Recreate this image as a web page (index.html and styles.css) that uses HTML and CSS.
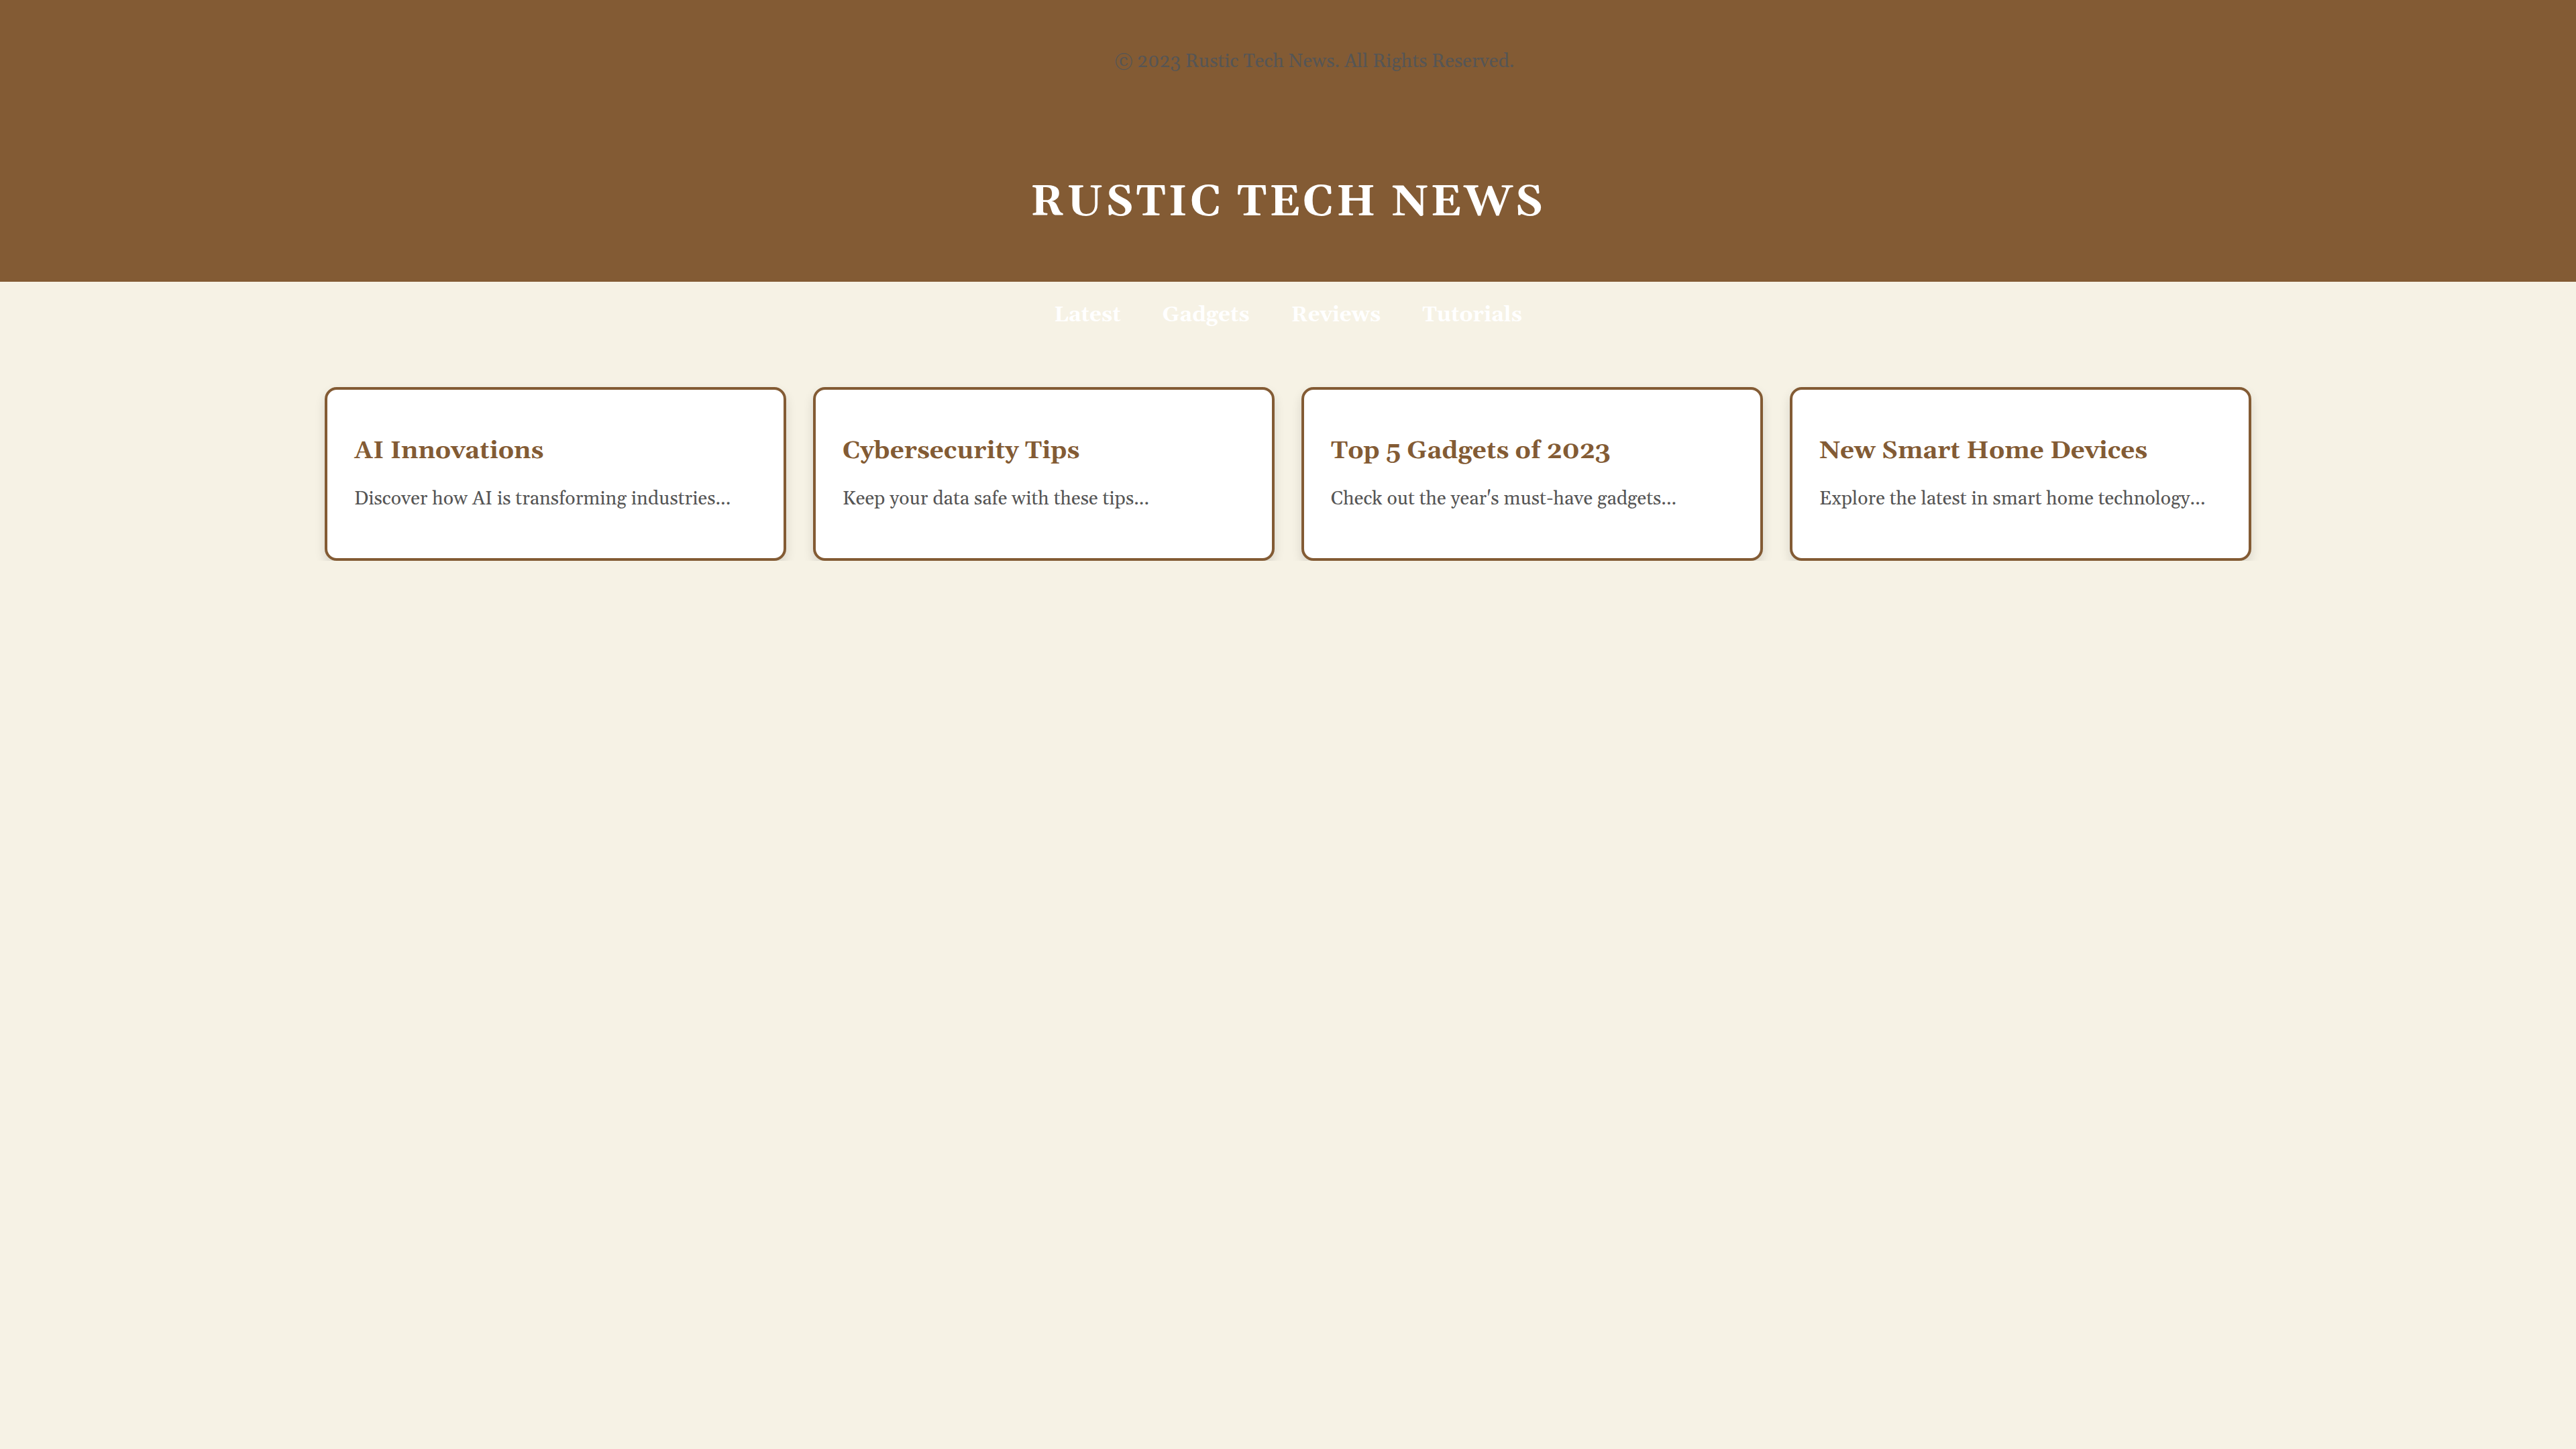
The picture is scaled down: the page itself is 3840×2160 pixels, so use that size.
FILE: index.html
```html
<!DOCTYPE html>
<html lang="en">
<head>
<meta charset="utf-8">
<title>Rustic Tech News</title>
<link rel="stylesheet" href="styles.css">
</head>
<body>
  <header class="site-header">
    <div class="header-note"><p>© 2023 Rustic Tech News. All Rights Reserved.</p></div>
    <h1 class="site-title">RUSTIC TECH NEWS</h1>
  </header>
  <nav class="main-nav">
    <a href="#" class="nav-link">Latest</a>
    <a href="#" class="nav-link">Gadgets</a>
    <a href="#" class="nav-link">Reviews</a>
    <a href="#" class="nav-link">Tutorials</a>
  </nav>
  <main class="cards">
    <article class="card">
      <h3 class="card-title">AI Innovations</h3>
      <p class="card-text">Discover how AI is transforming industries...</p>
    </article>
    <article class="card">
      <h3 class="card-title">Cybersecurity Tips</h3>
      <p class="card-text">Keep your data safe with these tips...</p>
    </article>
    <article class="card">
      <h3 class="card-title">Top 5 Gadgets of 2023</h3>
      <p class="card-text">Check out the year's must-have gadgets...</p>
    </article>
    <article class="card">
      <h3 class="card-title">New Smart Home Devices</h3>
      <p class="card-text">Explore the latest in smart home technology...</p>
    </article>
  </main>
</body>
</html>
```
FILE: styles.css
```css
html, body {
  margin: 0;
  padding: 0;
}

body {
  background: #f6f2e5;
  font-family: Georgia, "Gelasio", "Liberation Serif", serif;
  color: #555;
  font-size: 32px;
  line-height: normal;
}

.site-header {
  box-sizing: border-box;
  height: 420px;
  background: #835b34;
  padding-top: 74px;
  text-align: center;
}

.header-note {
  padding-left: 79px;
}

.header-note p {
  margin: 0;
  font-size: 28.4px;
  color: #555;
}

.site-title {
  margin: 152px 0 0;
  font-size: 64px;
  font-weight: bold;
  letter-spacing: 4px;
  color: #fff;
}

.main-nav {
  display: flex;
  justify-content: center;
  gap: 62px;
  padding-top: 30px;
}

.nav-link {
  color: #fff;
  font-weight: bold;
  font-size: 31.5px;
  text-decoration: none;
}

.cards {
  display: grid;
  grid-template-columns: repeat(4, 1fr);
  gap: 40px;
  max-width: 2872px;
  margin: 87px auto 0;
}

.card {
  background: #fff;
  border: 4px solid #835b34;
  border-radius: 18px;
  padding: 40px;
  box-shadow: 0 8px 16px rgba(0, 0, 0, 0.12);
  line-height: 1.5;
}

.card-title {
  margin: 24px 0 23px;
  font-size: 36.8px;
  font-weight: bold;
  color: #835b34;
}

.card-text {
  margin: 0 0 26px;
  font-size: 28.4px;
  color: #555;
}
```
